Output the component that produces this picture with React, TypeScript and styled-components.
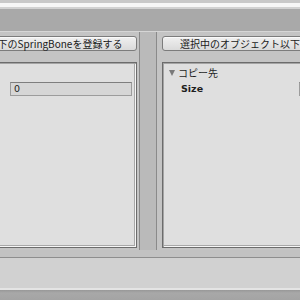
import styled, { createGlobalStyle } from 'styled-components';

const GlobalStyle = createGlobalStyle`
  html, body {
    margin: 0;
    padding: 0;
    background: #c2c2c2;
  }
  body {
    font-family: "Noto Sans CJK JP", "DejaVu Sans", sans-serif;
    font-size: 10px;
    color: #1e1e1e;
  }
`;

const Window = styled.div`
  width: 300px;
  height: 300px;
  overflow: hidden;
  display: flex;
  flex-direction: column;
  background: #c2c2c2;
`;

const TitleBar = styled.div`
  height: 32px;
  flex: none;
  background: #a9a9a9;
  border-top: 3px solid #c9c9c9;
  box-shadow: inset 0 4px 0 #f7f7f7, inset 0 6px 0 #d2d2d2, inset 0 -1px 0 #d6d6d6;
  box-sizing: border-box;
`;

const Split = styled.div`
  display: flex;
  margin-left: -130px;
  height: 218px;
  flex: none;
`;

const Column = styled.section<{ $side: 'left' | 'right' }>`
  width: 270px;
  flex: none;
  box-sizing: border-box;
  background: #c4c4c4;
  display: flex;
  flex-direction: column;
  padding: 4px ${(p) => (p.$side === 'left' ? '2px' : '3px')} 2px
    ${(p) => (p.$side === 'left' ? '3px' : '5px')};
  ${(p) =>
    p.$side === 'left'
      ? 'border-right: 1px solid #8a8a8a;'
      : 'border-left: 1px solid #8a8a8a;'}
`;

const Gutter = styled.div`
  width: 16px;
  flex: none;
  background: #bababa;
`;

const Button = styled.button`
  height: 15px;
  margin: 0;
  padding: 0;
  border: 1px solid #7c7c7c;
  border-radius: 3px;
  background: linear-gradient(#f0f0f0, #dadada);
  box-shadow: inset 0 1px 0 #fafafa;
  font-family: inherit;
  font-size: 10px;
  line-height: 13px;
  color: #1a1a1a;
  white-space: nowrap;
  text-align: center;
`;

const Panel = styled.div`
  margin-top: 11px;
  flex: 1;
  box-sizing: border-box;
  background: #dfdfdf;
  border: 1px solid #6c6c6c;
  box-shadow: inset 1px 1px 0 #a4a4a4, inset -1px -1px 0 #f6f6f6,
    inset -5px -5px 0 -3px #a8a8a8;
  padding: 3px 4px 0 6px;
  display: flex;
  flex-direction: column;
`;

const Foldout = styled.div`
  height: 14px;
  display: flex;
  align-items: center;
  gap: 2px;
  line-height: 14px;
`;

const Arrow = styled.span`
  width: 0;
  height: 0;
  border-left: 3.5px solid transparent;
  border-right: 3.5px solid transparent;
  border-top: 6px solid #7a7a7a;
  margin-right: 1px;
`;

const FieldRow = styled.div`
  display: grid;
  grid-template-columns: 130px 1fr;
  align-items: center;
  height: 15px;
  margin-top: 1px;
`;

const Label = styled.span`
  padding-left: 12px;
  font-family: "DejaVu Sans", sans-serif;
  font-weight: bold;
  font-size: 9.5px;
`;

const Input = styled.div`
  height: 14px;
  box-sizing: border-box;
  background: #d6d6d6;
  border: 1px solid #9c9c9c;
  border-top-color: #7e7e7e;
  padding-left: 3px;
  font-family: "DejaVu Sans", sans-serif;
  font-size: 9.5px;
  line-height: 12px;
`;

const Footer = styled.div`
  flex: 1;
  display: flex;
  flex-direction: column;
`;

const FooterGap = styled.div`
  height: 7px;
  border-bottom: 1px solid #8e8e8e;
`;

const StatusArea = styled.div`
  height: 30px;
  background: #d1d1d1;
  border-bottom: 2px solid #e4e4e4;
`;

const BottomBand = styled.div`
  flex: 1;
  background: linear-gradient(#989898, #a8a8a8 3px, #a4a4a4);
`;

export default function App() {
  return (
    <Window>
      <GlobalStyle />
      <TitleBar />
      <Split>
        <Column $side="left">
          <Button>選択中のオブジェクト以下のSpringBoneを登録する</Button>
          <Panel>
            <Foldout />
            <FieldRow>
              <Label />
              <Input>0</Input>
            </FieldRow>
          </Panel>
        </Column>
        <Gutter />
        <Column $side="right">
          <Button>選択中のオブジェクト以下のSpringBoneをコピー</Button>
          <Panel>
            <Foldout>
              <Arrow />
              コピー先
            </Foldout>
            <FieldRow>
              <Label>Size</Label>
              <Input>0</Input>
            </FieldRow>
          </Panel>
        </Column>
      </Split>
      <Footer>
        <FooterGap />
        <StatusArea />
        <BottomBand />
      </Footer>
    </Window>
  );
}
